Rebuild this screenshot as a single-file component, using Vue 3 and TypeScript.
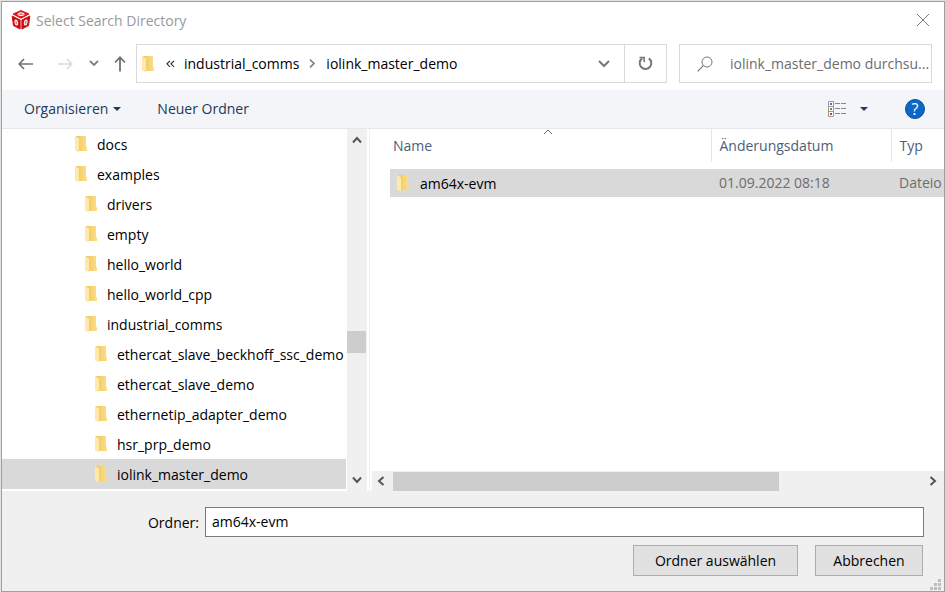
<script setup lang="ts">
import { ref } from 'vue'

interface TreeNode {
  name: string
  level: number
}

const tree: TreeNode[] = [
  { name: 'docs', level: 0 },
  { name: 'examples', level: 0 },
  { name: 'drivers', level: 1 },
  { name: 'empty', level: 1 },
  { name: 'hello_world', level: 1 },
  { name: 'hello_world_cpp', level: 1 },
  { name: 'industrial_comms', level: 1 },
  { name: 'ethercat_slave_beckhoff_ssc_demo', level: 2 },
  { name: 'ethercat_slave_demo', level: 2 },
  { name: 'ethernetip_adapter_demo', level: 2 },
  { name: 'hsr_prp_demo', level: 2 },
  { name: 'iolink_master_demo', level: 2 },
]

const selected = ref('iolink_master_demo')
const folder = ref('am64x-evm')
const query = ref('')
</script>

<template>
  <svg class="defs" aria-hidden="true">
    <defs>
      <linearGradient id="folder-fill" x1="0" x2="1">
        <stop offset="0" stop-color="#efc662" />
        <stop offset="1" stop-color="#fcdf88" />
      </linearGradient>
      <symbol id="folder" viewBox="0 0 13 18">
        <path d="M1 1h10v10.500l1 1V16H3z" fill="url(#folder-fill)" />
        <path d="M0 1l4 2.500V17.500L0 15.500z" fill="#ffe9a9" />
      </symbol>
    </defs>
  </svg>
  <main class="dialog">
    <header class="titlebar">
      <svg class="logo" viewBox="0 0 20 20" aria-hidden="true">
        <path d="M10 .6l8 3.400-8 4.200L2 4z" fill="#d8161c" stroke="#d8161c" stroke-linejoin="round" />
        <path d="M1.200 6l7.900 4v9L2.500 15.600z" fill="#cc0c12" stroke="#cc0c12" stroke-linejoin="round" />
        <path d="M18.800 6l-7.900 4v9l6.600-3.400z" fill="#cc0c12" stroke="#cc0c12" stroke-linejoin="round" />
        <ellipse cx="10" cy="4.200" rx="3.200" ry="1.400" fill="#e87a7d" stroke="#fff" />
        <ellipse cx="5.300" cy="12.500" rx="1.300" ry="2.600" fill="#e87a7d" stroke="#fff" transform="rotate(-10 5.300 12.500)" />
        <ellipse cx="14.700" cy="12.500" rx="1.300" ry="2.600" fill="#e87a7d" stroke="#fff" transform="rotate(10 14.700 12.500)" />
      </svg>
      <h1>Select Search Directory</h1>
      <button class="plain close" type="button" aria-label="Schließen">
        <svg width="14" height="14" viewBox="0 0 14 14"><path d="M1 1l12 12M13 1L1 13" stroke="#777" fill="none" /></svg>
      </button>
    </header>

    <nav class="navbar">
      <div class="history">
        <button class="plain" type="button" aria-label="Zurück">
          <svg width="16" height="12" viewBox="0 0 16 12"><path d="M15 6H1.500M6 1L1.200 6 6 11" stroke="#727272" stroke-width="1.700" fill="none" /></svg>
        </button>
        <button class="plain forward" type="button" aria-label="Vorwärts">
          <svg width="16" height="12" viewBox="0 0 16 12"><path d="M1 6h13.500M10 1l4.800 5L10 11" stroke="#dadada" stroke-width="1.700" fill="none" /></svg>
        </button>
        <button class="plain recent" type="button" aria-label="Zuletzt besucht">
          <svg width="10" height="7" viewBox="0 0 10 7"><path d="M1 1l4 4 4-4" stroke="#808080" stroke-width="1.800" fill="none" /></svg>
        </button>
        <button class="plain up" type="button" aria-label="Nach oben">
          <svg width="12" height="16" viewBox="0 0 12 16"><path d="M6 15.500V1.500M1 6.500L6 1.300l5 5.200" stroke="#727272" stroke-width="1.800" fill="none" /></svg>
        </button>
      </div>
      <div class="address">
        <svg class="folder"><use href="#folder" /></svg>
        <svg class="more" width="9" height="8" viewBox="0 0 9 8"><path d="M4 .8L1 3.800l3 3M8 .8L5 3.800l3 3" stroke="#333" stroke-width="1.200" fill="none" /></svg>
        <a href="#industrial_comms">industrial_comms</a>
        <svg class="sep" width="7" height="9" viewBox="0 0 7 9"><path d="M1 .7l4 3.800-4 3.800" stroke="#808080" stroke-width="1.700" fill="none" /></svg>
        <a href="#iolink_master_demo">iolink_master_demo</a>
        <button class="plain expand" type="button" aria-label="Verlauf">
          <svg width="12" height="8" viewBox="0 0 12 8"><path d="M1 1l5 5 5-5" stroke="#777" stroke-width="2" fill="none" /></svg>
        </button>
        <button class="plain refresh" type="button" aria-label="Aktualisieren">
          <svg width="15" height="15" viewBox="0 0 15 15"><path d="M10.800 2.400a5.800 5.800 0 1 1-6.600 0" stroke="#777" stroke-width="2" fill="none" /><path d="M1.500 1.500h4.700v4.700" stroke="#777" stroke-width="1.600" fill="none" /></svg>
        </button>
      </div>
      <label class="search">
        <svg width="16" height="16" viewBox="0 0 16 16" aria-hidden="true"><circle cx="10" cy="6" r="5" stroke="#777" fill="none" /><path d="M6.300 9.700L.7 15.300" stroke="#777" stroke-width="1.200" /></svg>
        <input v-model="query" type="text" aria-label="Suchen" placeholder="iolink_master_demo durchsu..." />
      </label>
    </nav>

    <div class="toolbar">
      <button class="plain" type="button">Organisieren<i class="caret"></i></button>
      <button class="plain" type="button">Neuer Ordner</button>
      <button class="plain view" type="button" aria-label="Ansicht">
        <svg width="18" height="16" viewBox="0 0 18 16">
          <path d="M.5.500h5v15h-5zM.5 5.500h5M.5 10.500h5" fill="#fff" stroke="#999" />
          <path d="M7 2.500h5m1 0h5M7 7.500h5m1 0h5M7 12.500h5m1 0h5" stroke="#8a8a8a" />
          <path d="M2 2h2v2H2z" fill="#3a76a8" /><path d="M2 7h2v2H2z" fill="#7c8a2a" /><path d="M2 12h2v2H2z" fill="#c04020" />
        </svg>
        <i class="caret"></i>
      </button>
      <button class="help" type="button" aria-label="Hilfe">?</button>
    </div>

    <div class="content">
      <ul class="tree">
        <li v-for="node in tree" :key="node.name">
          <button
            type="button"
            class="plain node"
            :class="['level-' + node.level, { active: node.name === selected }]"
            @click="selected = node.name"
          >
            <svg class="folder"><use href="#folder" /></svg><span>{{ node.name }}</span>
          </button>
        </li>
      </ul>
      <div class="vscroll">
        <svg width="10" height="8" viewBox="0 0 10 8"><path d="M1 6.500l4-4.500 4 4.500" stroke="#555" stroke-width="2" fill="none" /></svg>
        <div class="track-above"></div>
        <div class="vthumb"></div>
        <div class="track-below"></div>
        <svg width="10" height="8" viewBox="0 0 10 8"><path d="M1 1.500L5 6l4-4.500" stroke="#555" stroke-width="2" fill="none" /></svg>
      </div>
      <section class="files">
        <div class="listing">
          <table>
            <colgroup><col class="c-pad" /><col class="c-name" /><col class="c-date" /><col /></colgroup>
            <thead>
              <tr>
                <td></td>
                <th scope="col">
                  Name
                  <svg class="sort" width="10" height="6" viewBox="0 0 10 6"><path d="M1 5l4-4 4 4" stroke="#666" fill="none" /></svg>
                </th>
                <th scope="col">Änderungsdatum</th>
                <th scope="col">Typ</th>
              </tr>
            </thead>
            <tbody>
              <tr class="gap"><td colspan="4"></td></tr>
              <tr class="row">
                <td></td>
                <td><span class="file"><svg class="folder"><use href="#folder" /></svg><span>am64x-evm</span></span></td>
                <td>01.09.2022 08:18</td>
                <td>Dateio</td>
              </tr>
            </tbody>
          </table>
        </div>
        <div class="hscroll">
          <svg width="8" height="10" viewBox="0 0 8 10"><path d="M6.500 1L2 5l4.500 4" stroke="#555" stroke-width="2" fill="none" /></svg>
          <div class="hthumb"></div>
          <div class="htrack"></div>
          <svg width="8" height="10" viewBox="0 0 8 10"><path d="M1.500 1L6 5 1.500 9" stroke="#555" stroke-width="2" fill="none" /></svg>
        </div>
      </section>
    </div>

    <footer class="footer">
      <div class="field">
        <label for="folder-name">Ordner:</label>
        <input id="folder-name" v-model="folder" type="text" />
      </div>
      <div class="actions">
        <button type="button" class="wide">Ordner auswählen</button>
        <button type="button">Abbrechen</button>
      </div>
      <svg class="grip" width="11" height="11" viewBox="0 0 11 11" aria-hidden="true">
        <path d="M8 0h3v3H8zM4 4h3v3H4zM8 4h3v3H8zM0 8h3v3H0zM4 8h3v3H4zM8 8h3v3H8z" fill="#bdbdbd" />
      </svg>
    </footer>
  </main>
</template>

<style>
body {
  background: #e3e3e3;
}
</style>

<style scoped>
* {
  box-sizing: border-box;
}
.defs {
  position: absolute;
  width: 0;
  height: 0;
}
.dialog {
  display: flex;
  flex-direction: column;
  min-height: calc(100vh - 1px);
  margin: 1px 0 0 1px;
  border: 1px solid #a0a0a0;
  background: #fff;
  color: #000;
  font: 14px/20px 'Open Sans', 'Noto Sans', sans-serif;
}
svg {
  display: block;
  flex: none;
}
button,
input {
  font: inherit;
  color: inherit;
}
.plain {
  display: flex;
  align-items: center;
  border: 0;
  padding: 0;
  background: none;
}
.folder {
  width: 13px;
  height: 18px;
}
.titlebar {
  display: flex;
  align-items: center;
  height: 36px;
  padding: 0 14px 0 9px;
}
.logo {
  width: 20px;
  height: 20px;
}
h1 {
  margin: 0 auto 0 5px;
  padding-top: 2px;
  font: inherit;
  color: #999;
}
.navbar {
  display: flex;
  height: 52px;
  padding: 6px 12px 7px 16px;
}
.history {
  display: flex;
  align-items: center;
  width: 118px;
}
.forward {
  margin-left: 23px;
}
.recent {
  margin-left: 16px;
}
.up {
  margin-left: 15px;
}
.address {
  display: flex;
  flex: 1;
  align-items: center;
  border: 1px solid #d9d9d9;
  padding-left: 5px;
  min-width: 0;
}
.address a {
  color: inherit;
  text-decoration: none;
}
.more {
  margin: 0 9px 0 11px;
}
.sep {
  margin: 0 10px;
}
.expand {
  margin: 0 14px 0 auto;
}
.refresh {
  align-self: stretch;
  justify-content: center;
  width: 42px;
  border-left: 1px solid #d9d9d9;
}
.search {
  display: flex;
  align-items: center;
  gap: 17px;
  width: 253px;
  margin-left: 12px;
  border: 1px solid #d9d9d9;
  padding-left: 17px;
}
.search input {
  flex: 1;
  min-width: 0;
  border: 0;
  padding: 0;
  background: none;
}
.search input::placeholder {
  color: #6d6d6d;
  opacity: 1;
}
.toolbar {
  display: flex;
  align-items: center;
  gap: 36px;
  height: 39px;
  padding: 0 19px 0 22px;
  border-bottom: 1px solid #e5e7ea;
  background: #f4f5f8;
  color: #1e395b;
}
.caret {
  margin-left: 5px;
  border: 4px solid transparent;
  border-top-color: #1e395b;
  border-bottom: 0;
}
.view {
  margin-left: auto;
  margin-right: 1px;
}
.view .caret {
  margin-left: 14px;
}
.help {
  width: 20px;
  height: 20px;
  border: 1px solid #0a4f9c;
  border-radius: 50%;
  padding: 0;
  background: #0b68c8;
  color: #fff;
  font-size: 16px;
  line-height: 18px;
}
.content {
  display: flex;
  flex: 1;
}
.tree {
  flex: none;
  width: 344px;
  margin: 0;
  padding: 0;
  list-style: none;
}
.node {
  width: 100%;
  height: 30px;
  gap: 9px;
  white-space: nowrap;
}
.node span,
.file span {
  padding-top: 2px;
}
.level-0 {
  padding-left: 73px;
}
.level-1 {
  padding-left: 83px;
}
.level-2 {
  padding-left: 93px;
}
.active,
.row {
  background: #d9d9d9;
}
.vscroll {
  display: flex;
  flex-direction: column;
  align-items: center;
  width: 20px;
  margin-left: 1px;
  padding: 7px 0;
  background: #f0f0f0;
}
.vthumb {
  align-self: stretch;
  height: 22px;
  margin-right: 1px;
  background: #cdcdcd;
}
.track-above {
  flex: 187;
}
.track-below {
  flex: 123;
}
.files {
  display: flex;
  flex: 1;
  flex-direction: column;
  min-width: 0;
  margin-left: 2px;
  border-left: 1px solid #f0f0f0;
}
.listing {
  flex: 1;
  padding-left: 20px;
}
table {
  width: 100%;
  table-layout: fixed;
  border-collapse: collapse;
}
.c-pad {
  width: 0;
}
.c-name {
  width: 321px;
}
.c-date {
  width: 180px;
}
th {
  position: relative;
  height: 33px;
  border-right: 1px solid #e3e5e8;
  padding: 0 0 0 3px;
  text-align: left;
  font-weight: 400;
  color: #4c607a;
}
th ~ th {
  padding-left: 8px;
}
th:last-child {
  border-right: 0;
}
thead td,
.gap td {
  padding: 0;
}
.sort {
  position: absolute;
  top: 0;
  left: 153px;
}
.gap {
  height: 7px;
}
.row td {
  height: 28px;
  padding: 0 0 0 8px;
  white-space: nowrap;
  color: #6d6d6d;
}
.row td:first-child {
  padding: 0;
}
.row td:nth-child(2) {
  padding-left: 7px;
}
.file {
  display: flex;
  align-items: center;
  gap: 10px;
  color: #000;
}
.hscroll {
  display: flex;
  align-items: center;
  gap: 8px;
  height: 20px;
  margin-left: 2px;
  padding: 0 7px 0 5px;
  background: #f0f0f0;
}
.hthumb {
  flex: 387;
  height: 19px;
  background: #cdcdcd;
}
.htrack {
  flex: 134;
}
.footer {
  position: relative;
  padding: 16px 20px 15px;
  background: #f0f0f0;
}
.field {
  display: flex;
  align-items: center;
}
.field label {
  width: 183px;
  padding: 2px 6px 0 0;
  text-align: right;
}
.field input {
  flex: 1;
  min-width: 0;
  height: 30px;
  border: 1px solid #7a7a7a;
  padding: 0 6px 2px;
  background: #fff;
}
.actions {
  display: flex;
  justify-content: flex-end;
  gap: 17px;
  margin: 8px 1px 0 0;
}
.actions button {
  width: 108px;
  height: 31px;
  border: 1px solid #adadad;
  padding: 0;
  background: #e1e1e1;
}
.actions .wide {
  width: 165px;
}
.grip {
  position: absolute;
  right: 3px;
  bottom: 1px;
}
</style>
